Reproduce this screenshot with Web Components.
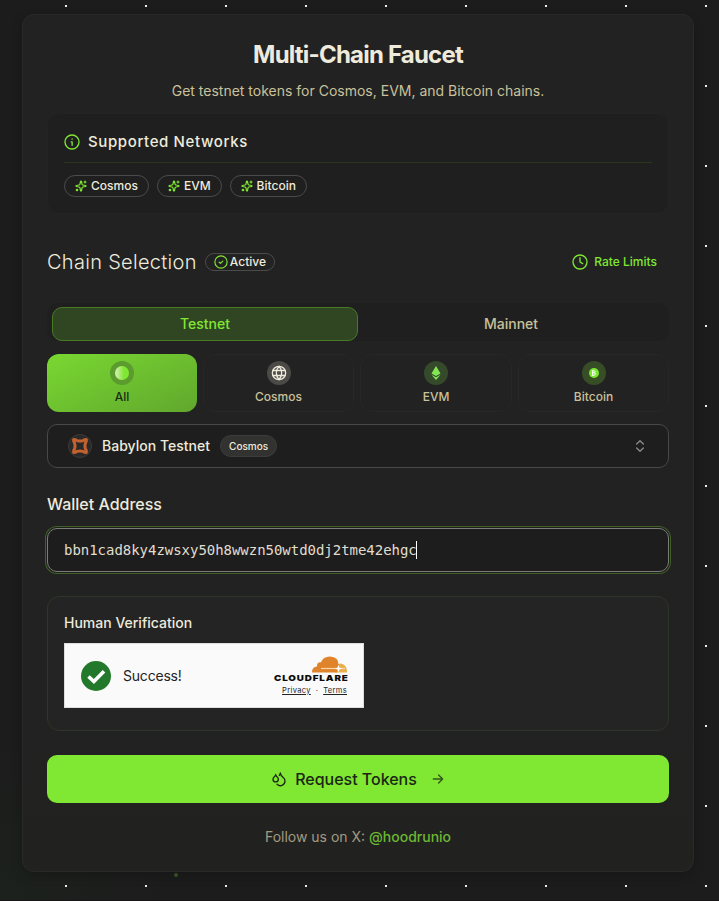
<!DOCTYPE html>
<html lang="en">
<head>
<meta charset="utf-8">
<title>Multi-Chain Faucet</title>
<style>
html,body{margin:0;height:100%}
body{font-family:Inter,"Liberation Sans",sans-serif;color:#eeebdc;overflow:hidden;
--green:#80e732;--cream:#eeebdc;--tan:#c9c19b;background:#1c1c1c;-webkit-font-smoothing:antialiased}
</style>
</head>
<body>
<faucet-page></faucet-page>
<script>
const define=(name,html)=>{
  const t=document.createElement('template');t.innerHTML=html;
  customElements.define(name,class extends HTMLElement{
    constructor(){super();this.attachShadow({mode:'open'}).append(t.content.cloneNode(true));}
  });
};
const ICONS={
  info:'<circle cx="12" cy="12" r="10.5"/><path d="M12.2 17v-5.2h-1.4M12.2 7.4v.3"/>',
  spark:'<path d="M11.017 2.814a1 1 0 0 1 1.966 0l1.051 5.558a2 2 0 0 0 1.594 1.594l5.558 1.051a1 1 0 0 1 0 1.966l-5.558 1.051a2 2 0 0 0-1.594 1.594l-1.051 5.558a1 1 0 0 1-1.966 0l-1.051-5.558a2 2 0 0 0-1.594-1.594l-5.558-1.051a1 1 0 0 1 0-1.966l5.558-1.051a2 2 0 0 0 1.594-1.594z"/><path d="M20 2v4M22 4h-4"/><circle cx="4" cy="20" r="1.5"/>',
  check:'<circle cx="12" cy="12" r="10.5"/><path d="m8.8 12.2 2.2 2.2 4.2-4"/>',
  clock:'<circle cx="12" cy="12" r="10.5"/><path d="M12 5.5V12l4 2.5"/>',
  globe:'<circle cx="12" cy="12" r="10"/><path d="M12 2a14.5 14.5 0 0 0 0 20 14.5 14.5 0 0 0 0-20M3 8.3h18M3 15.7h18"/>',
  updown:'<path d="m7 15 5 5 5-5M7 9l5-5 5 5"/>',
  drops:'<path d="M7 16.3c2.2 0 4-1.83 4-4.05 0-1.16-.57-2.26-1.71-3.19S7.29 6.75 7 5.3c-.29 1.45-1.14 2.84-2.29 3.76S3 11.1 3 12.25c0 2.22 1.8 4.05 4 4.05z"/><path d="M12.56 6.6A10.97 10.97 0 0 0 14 3.02c.5 2.5 2 4.9 4 6.5s3 3.5 3 5.5a6.98 6.98 0 0 1-11.91 4.97"/>',
  arrow:'<path d="M4 12h16M13 5l7 7-7 7"/>'
};
customElements.define('ui-icon',class extends HTMLElement{
  connectedCallback(){
    if(this.shadowRoot)return;
    const s=this.getAttribute('size')||16,w=this.getAttribute('stroke')||2;
    this.attachShadow({mode:'open'}).innerHTML=`<style>:host{display:block;flex:none;width:${s}px;height:${s}px}svg{display:block}</style>
    <svg width="${s}" height="${s}" viewBox="0 0 24 24" fill="none" stroke="currentColor" stroke-width="${w}" stroke-linecap="round" stroke-linejoin="round">${ICONS[this.getAttribute('name')]}</svg>`;
  }
});
define('ui-badge',`<style>:host{display:flex;align-items:center;height:20px;border:1px solid #4b4b4a;border-radius:12px;padding:0 10px;gap:4px;font-weight:500;font-size:12px;line-height:16px;white-space:nowrap}
::slotted(ui-icon){color:var(--green)}</style><slot name="icon"></slot><span><slot></slot></span>`);
define('network-info',`<style>:host{display:block;box-sizing:border-box;height:101px;margin-top:12px;padding:16px;background:#1f1f1f;border:1px solid #242424;border-radius:12px}
header{display:flex;align-items:center;gap:8px;height:24px;padding-bottom:8px;border-bottom:1px solid #28371d;margin-bottom:12px;font-size:15px;line-height:22px;font-weight:500;letter-spacing:.62px}
ui-icon{color:var(--green)}.row{display:flex;gap:8px}</style>
<header><ui-icon name="info" size="16" stroke="2"></ui-icon><span>Supported Networks</span></header>
<div class="row"><slot></slot></div>`);
define('section-head',`<style>:host{display:flex;align-items:center;height:32px;margin-top:32px}
h2{margin:0;font-size:20px;font-weight:300;letter-spacing:.3px;line-height:28px;white-space:nowrap;margin-right:8px}
ui-badge{height:16px;padding:0 8px;gap:2px}.limits{margin-left:auto;display:flex;align-items:center;gap:6px;margin-right:12px;color:var(--green);font-size:12px;line-height:14px;font-weight:500}.limits span{margin-top:-1px}</style>
<h2><slot></slot></h2><ui-badge><ui-icon slot="icon" name="check" size="14" stroke="2"></ui-icon>Active</ui-badge>
<div class="limits"><ui-icon name="clock" size="16" stroke="2"></ui-icon><span>Rate Limits</span></div>`);
define('net-tabs',`<style>:host{display:flex;box-sizing:border-box;height:38px;margin-top:25px;padding:4px 5px 0;background:#1f1f1f;border-radius:12px}
div{flex:0 0 306px;box-sizing:border-box;height:34px;display:flex;align-items:center;justify-content:center;padding-bottom:1px;font-size:14px;line-height:18px;font-weight:500;color:var(--tan);border:1px solid transparent;border-radius:10px}
.on{color:var(--green);background:#304623;border-color:#467a25}</style><div class="on">Testnet</div><div>Mainnet</div>`);
define('chain-card',`<style>:host{display:flex;flex-direction:column;align-items:center;box-sizing:border-box;height:58px;padding-top:6px;border:1px solid #272727;border-radius:12px;background:#222;color:var(--tan);font-size:12px;font-weight:500;line-height:16px}
:host([on]){border-color:transparent;background:linear-gradient(155deg,#79d831,#61a72d) border-box;color:#1c2b14}
.ic{width:24px;height:24px;border-radius:50%;display:flex;align-items:center;justify-content:center;background:var(--disc,#4b4a47);margin-bottom:4px;color:var(--cream)}</style>
<div class="ic"><slot name="icon"></slot></div><span><slot></slot></span>`);
define('chain-select',`<style>:host{display:flex;align-items:center;box-sizing:border-box;height:44px;margin-top:12px;padding:0 20px;background:#1e1e1e;border:1px solid #484848;border-radius:10px;font-size:14px;line-height:18px;font-weight:500}
.logo{box-sizing:border-box;width:24px;height:24px;border:1px solid #3b3b3a;border-radius:50%;background:#292929;display:flex;align-items:center;justify-content:center;margin-right:10px}
ui-badge{height:20px;font-size:10px;padding:0 8px;background:#323230;border-color:#3c3c3a;margin-left:10px}.ud{margin-left:auto;color:#8c8b83}span{letter-spacing:.02px}</style>
<div class="logo"><svg width="18" height="18" viewBox="0 0 18 18" fill="none" stroke="#c4622f" stroke-linejoin="round"><path stroke-width="3" d="M2.6 2.6Q5 2.4 6 3.6Q9 4.6 12 3.6Q13 2.4 15.4 2.6Q15.6 5 14.4 6Q13.4 9 14.4 12Q15.6 13 15.4 15.4Q13 15.6 12 14.4Q9 13.4 6 14.4Q5 15.6 2.6 15.4Q2.4 13 3.6 12Q4.6 9 3.6 6Q2.4 5 2.6 2.6Z"/></svg></div>
<span><slot></slot></span><ui-badge>Cosmos</ui-badge><ui-icon class="ud" name="updown" size="16" stroke="2"></ui-icon>`);
define('wallet-field',`<style>:host{display:block;margin-top:24px}
label{display:block;font-size:16px;font-weight:500;line-height:24px;margin-bottom:12px}
.in{display:flex;align-items:center;box-sizing:border-box;height:44px;padding:0 16px;border:1px solid #7b7b77;border-radius:10px;background:#1d1d1d;box-shadow:0 0 0 1px #1f1f1f,0 0 0 2px #3f6127;font:14px "DejaVu Sans Mono","Liberation Mono",monospace;letter-spacing:-.03px;color:#e0ddcf}
i{width:1px;height:18px;background:#fff;margin-left:-1px}</style><label>Wallet Address</label><div class="in"><span><slot></slot></span><i></i></div>`);
define('human-check',`<style>:host{display:block;box-sizing:border-box;height:135px;margin-top:24px;padding:16px;background:#242424;border:1px solid #2d3628;border-radius:12px}
.t{font-size:14px;font-weight:500;line-height:20px;margin-bottom:10px}
.w{box-sizing:border-box;width:300px;height:65px;border:1px solid #dedede;background:#fafafa;color:#232323;display:flex;align-items:center;padding:0 15px 0 16px;font-size:14px}
.w>span{letter-spacing:-.2px}.ok{margin-right:12px}.cf{margin-left:auto;display:flex;flex-direction:column;align-items:flex-end}
.l{font-size:7.5px;line-height:10px;margin-top:3px;letter-spacing:.35px;margin-right:1px;margin-bottom:-1px}u{text-underline-offset:1px}svg{display:block}</style>
<div class="t">Human Verification</div><div class="w">
<svg class="ok" width="30" height="30" viewBox="0 0 30 30"><circle cx="15" cy="15" r="15" fill="#23792b"/><path d="m7.5 15.5 5.4 5L23 10.3" fill="none" stroke="#fff" stroke-width="3.6"/></svg><span>Success!</span>
<div class="cf"><svg width="75" height="27" viewBox="0 0 75 27"><path fill="#e8af4b" d="M62 16.5 65 8Q67.5 6.8 70 8.3Q74 10.2 74 16.5Z"/><path fill="#e0842c" d="M39 16.5Q38.8 10.8 44 10.4Q43.7 6 48 6.3Q50 .7 57 .5Q65.7.8 65.5 8.8Q64.4 10.5 64 16.5Z"/><path stroke="#f8d7ae" stroke-width="1.2" d="M48 12.5H72"/><path fill="#fff" d="m65.5 8.7.9 2.9 2.9.9-2.9.9-.9 2.9-.9-2.9-2.9-.9 2.9-.9Z"/><g transform="scale(1.2 1)"><text x=".8" y="25.3" font-family="Inter,sans-serif" font-weight="900" font-size="8.2" fill="#0b0b0b" textLength="61.6" lengthAdjust="spacing">CLOUDFLARE</text></g></svg>
<div class="l"><u>Privacy</u>&nbsp; · &nbsp;<u>Terms</u></div></div></div>`);
define('request-button',`<style>:host{display:flex;align-items:center;justify-content:center;height:48px;margin-top:24px;border-radius:10px;background:var(--green);color:#1b2714;font-size:16px;font-weight:500}
span{margin:0 14px 0 8px;letter-spacing:-.02px}.a{opacity:.75}</style><ui-icon name="drops" size="16" stroke="2"></ui-icon><span><slot></slot></span><ui-icon class="a" name="arrow" size="14" stroke="2.3"></ui-icon>`);
define('faucet-card',`<style>:host{display:block;box-sizing:border-box;width:672px;height:858px;padding:24px;background:linear-gradient(#222,#222 80%,#212120);border:1px solid #292929;border-radius:12px;box-shadow:0 4px 12px #0003}
h1{margin:0;text-align:center;font-size:24px;line-height:32px;font-weight:700;letter-spacing:-.8px}
.sub{margin:10px 0 0;text-align:center;font-size:14px;line-height:20px;color:var(--tan)}
.chains{display:grid;grid-template-columns:150fr 151fr 152fr 151fr;gap:6px;margin-top:13px}
.ball{width:14px;height:14px;border-radius:50%;background:linear-gradient(90deg,#d8f0bd,#80e732 65%)}
.follow{text-align:center;font-size:14px;line-height:20px;margin-top:24px;color:#a19b80}.follow b{font-weight:500;color:#6cb832}</style>
<h1>Multi-Chain Faucet</h1><p class="sub">Get testnet tokens for Cosmos, EVM, and Bitcoin chains.</p>
<network-info><ui-badge><ui-icon slot="icon" name="spark" size="12" stroke="2.4"></ui-icon>Cosmos</ui-badge><ui-badge><ui-icon slot="icon" name="spark" size="12" stroke="2.4"></ui-icon>EVM</ui-badge><ui-badge><ui-icon slot="icon" name="spark" size="12" stroke="2.4"></ui-icon>Bitcoin</ui-badge></network-info>
<section-head>Chain Selection</section-head><net-tabs></net-tabs>
<div class="chains"><chain-card on style="--disc:#5c9b2d"><div slot="icon" class="ball"></div>All</chain-card>
<chain-card><ui-icon slot="icon" name="globe" size="16" stroke="2"></ui-icon>Cosmos</chain-card>
<chain-card style="--disc:#344a2b"><svg slot="icon" width="10" height="14" viewBox="0 0 10 14" fill="#82e653"><path d="M5 0 9.5 7.5 5 10 .5 7.5ZM.5 8.8 5 11.3 9.5 8.8 5 14Z"/></svg>EVM</chain-card>
<chain-card style="--disc:#374d26"><svg slot="icon" width="10" height="10" viewBox="0 0 10 10"><circle cx="5" cy="5" r="5" fill="#7be632"/><path d="M3.9 1.9 3.3 7.7M3.6 2.8H5.5Q6.8 3.5 5.7 4.8H3.8M5.5 4.8Q7.5 6 5.5 7.2H3" fill="none" stroke="#fff" stroke-width="1"/></svg>Bitcoin</chain-card></div>
<chain-select>Babylon Testnet</chain-select>
<wallet-field>bbn1cad8ky4zwsxy50h8wwzn50wtd0dj2tme42ehgc</wallet-field>
<human-check></human-check><request-button>Request Tokens</request-button>
<div class="follow">Follow us on X: <b>@hoodrunio</b></div>`);
define('faucet-page',`<style>:host{display:block;box-sizing:border-box;position:relative;height:901px;padding:14px 0 0 22px;background:
radial-gradient(circle at 0 100%,#1c211d,#1c1c1c00 160px),#1c1c1c}
.dots{position:absolute;inset:0;background:conic-gradient(from 90deg at 78px 78px,#f0eddf 90deg,transparent 0) -13px -73px/80px 80px}
.p{position:absolute;left:174px;top:873px;width:4px;height:4px;border-radius:50%;background:#3b5a24}
.edge{position:absolute;left:0;right:0;bottom:0;height:1px;background:#171516}
faucet-card{position:relative}</style><div class="dots"></div><div class="p"></div><div class="edge"></div><faucet-card></faucet-card>`);
</script>
</body>
</html>
